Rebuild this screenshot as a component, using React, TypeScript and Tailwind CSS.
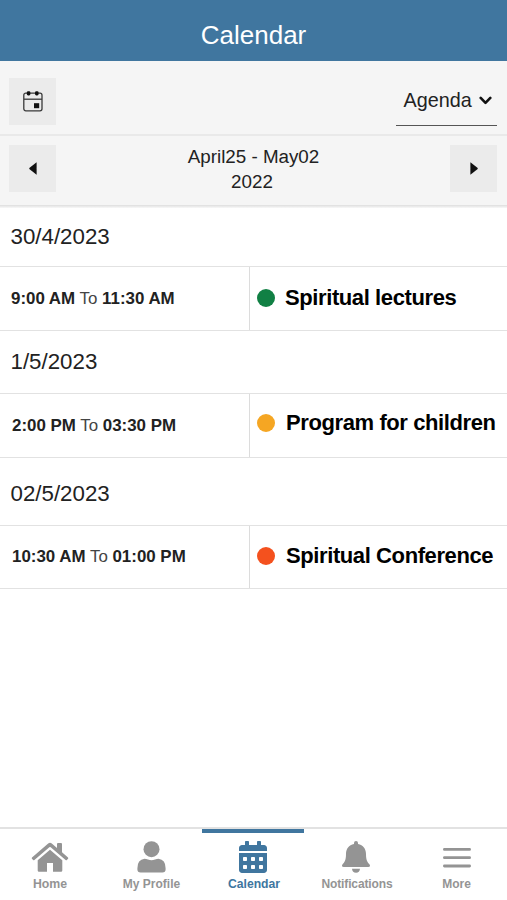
import React from "react";
import { FaCalendarAlt } from "react-icons/fa";

type AgendaEvent = {
  date: string;
  from: string;
  to: string;
  title: string;
  heading: string;
  row: string;
  time: string;
  dotOffset: string;
  label: string;
  dot: string;
};

const events: AgendaEvent[] = [
  {
    date: "30/4/2023",
    from: "9:00 AM",
    to: "11:30 AM",
    title: "Spiritual lectures",
    heading: "h-[58px] pl-[10.5px]",
    row: "h-[65px]",
    time: "pl-[11px]",
    dotOffset: "pb-0.5",
    label: "ml-2.5",
    dot: "bg-[#118044]",
  },
  {
    date: "1/5/2023",
    from: "2:00 PM",
    to: "03:30 PM",
    title: "Program for children",
    heading: "h-[62px] pl-[10.5px]",
    row: "h-[65px]",
    time: "pl-3",
    dotOffset: "pb-[6px]",
    label: "ml-[11px]",
    dot: "bg-[#f5a623]",
  },
  {
    date: "02/5/2023",
    from: "10:30 AM",
    to: "01:00 PM",
    title: "Spiritual Conference",
    heading: "h-[67px] pl-[10.5px] pt-1",
    row: "h-[64px]",
    time: "pl-3 pb-px",
    dotOffset: "pb-0.5",
    label: "ml-[11px]",
    dot: "bg-[#f4511e]",
  },
];

function TodayIcon() {
  return (
    <svg width="20" height="21" viewBox="0 0 20 21" fill="none">
      <rect x="0.8" y="2.2" width="18.2" height="17.6" rx="2" stroke="#3a3a3a" strokeWidth="1.3" />
      <path d="M1 8.2H19" stroke="#3a3a3a" strokeWidth="1.3" />
      <rect x="3.8" y="0.3" width="3.6" height="4.2" rx="1.4" fill="#111" />
      <rect x="12" y="0.3" width="3.6" height="4.2" rx="1.4" fill="#111" />
      <rect x="11" y="12.2" width="5.2" height="5" fill="#111" />
    </svg>
  );
}

function HomeIcon() {
  return (
    <svg width="38" height="32" viewBox="0 0 38 32" fill="currentColor">
      <path d="M1 16.4L17.2 2.4Q19 1 20.8 2.4L26 6.9V3Q26 2 27 2H30Q31 2 31 3V11.2L37 16.4Q37.6 17 37 17.7L35.9 18.9Q35.3 19.4 34.6 18.9L19.7 6.2Q19 5.7 18.3 6.2L3.4 18.9Q2.7 19.4 2.1 18.9L1 17.7Q.4 17 1 16.4Z" />
      <path d="M19 8.8L31.3 19.2V29.4Q31.3 30.7 30 30.7H22V22H16V30.7H8Q6.7 30.7 6.7 29.4V19.2Z" />
    </svg>
  );
}

function ProfileIcon() {
  return (
    <svg width="29" height="32" viewBox="0 0 29 32" fill="currentColor">
      <circle cx="14.5" cy="8.2" r="8" />
      <path d="M7.5 17.8Q9 17.8 11 18.6Q14.5 19.8 18 18.6Q20 17.8 21.5 17.8Q28.6 18.6 28.6 27.2V28.6Q28.6 31.6 25.4 31.6H3.6Q.4 31.6 .4 28.6V27.2Q.4 18.6 7.5 17.8Z" />
    </svg>
  );
}

function BellIcon() {
  return (
    <svg width="30" height="32" viewBox="0 0 30 32" fill="currentColor">
      <path d="M15 0Q17 0 17 2V3.1C22.2 4.1 25 8 25 13C25 19.5 26.5 21.3 28.4 23.2C29.6 24.5 29 26 27.3 26H2.7C1 26 .4 24.5 1.6 23.2C3.5 21.3 5 19.5 5 13C5 8 7.8 4.1 13 3.1V2Q13 0 15 0Z" />
      <path d="M11 27.8H19Q18.6 31.8 15 31.8Q11.4 31.8 11 27.8Z" />
    </svg>
  );
}

function MenuIcon() {
  return (
    <svg width="28" height="32" viewBox="0 0 28 32" stroke="currentColor" strokeWidth="2.8" strokeLinecap="round">
      <path d="M1.4 8.4H26.6M1.4 16.7H26.6M1.4 25H26.6" />
    </svg>
  );
}

export default function App() {
  return (
    <div className="flex h-[900px] w-[507px] flex-col overflow-hidden bg-white font-['Liberation_Sans',Arial,sans-serif] text-[#222]">
      <header className="flex h-[61px] shrink-0 items-center justify-center bg-[#40769f] pt-[9px] text-[26px] text-white">
        Calendar
      </header>

      <div className="flex h-[75px] shrink-0 items-start justify-between border-b-2 border-[#e9e9e9] bg-[#f5f5f5] pr-2.5 pl-[9px]">
        <button className="mt-[17px] flex h-[47px] w-[47px] items-center justify-center bg-[#ebebeb]">
          <TodayIcon />
        </button>
        <button className="mt-[15px] flex h-[50px] w-[101px] items-center justify-between border-b border-[#555] pr-[5px] pl-[7.5px]">
          <span className="text-[19.8px]">Agenda</span>
          <svg width="13" height="9" viewBox="0 0 13 9" fill="none" stroke="#111" strokeWidth="2.6" strokeLinecap="round" strokeLinejoin="round">
            <path d="M1.7 1.9L6.5 6.8L11.3 1.9" />
          </svg>
        </button>
      </div>

      <div className="flex h-[69px] shrink-0 items-start justify-between bg-[#f5f5f5] pt-[9px] pr-2.5 pl-[9px]">
        <button className="flex h-[47px] w-[47px] items-center justify-center bg-[#ebebeb]">
          <svg width="8" height="13" viewBox="0 0 8 13" fill="#111">
            <path d="M7.6 0.3V12.7L0.3 6.9V6.1Z" />
          </svg>
        </button>
        <div className="-mt-px pl-px text-center text-[18.8px] leading-[25px]">
          <p>April25 - May02</p>
          <p className="-ml-[3px]">2022</p>
        </div>
        <button className="flex h-[47px] w-[47px] items-center justify-center bg-[#ebebeb]">
          <svg width="8" height="13" viewBox="0 0 8 13" fill="#111">
            <path d="M0.4 0.3V12.7L7.7 6.9V6.1Z" />
          </svg>
        </button>
      </div>
      <div className="h-[3px] shrink-0 bg-linear-to-b from-[#dedede] to-[#f8f8f8]" />

      <main className="flex-1">
        {events.map((event) => (
          <section key={event.date}>
            <h2 className={`flex items-center text-[22.3px] ${event.heading}`}>{event.date}</h2>
            <div className={`flex border-y border-[#e2e2e2] ${event.row}`}>
              <div className={`flex w-[250px] items-center border-r border-[#dcdcdc] text-[16.9px] whitespace-pre ${event.time}`}>
                <b>{event.from}</b><span className="text-[#444]"> To </span><b>{event.to}</b>
              </div>
              <div className={`flex items-center pl-[7px] ${event.dotOffset}`}>
                <span className={`h-[18px] w-[18px] rounded-full ${event.dot}`} />
                <b className={`text-[22px] leading-6 tracking-[-0.4px] whitespace-nowrap text-black ${event.label}`}>{event.title}</b>
              </div>
            </div>
          </section>
        ))}
      </main>

      <nav className="flex h-[73px] shrink-0 border-t-2 border-[#e2e2e2] text-xs font-bold text-[#949494]">
        <a className="flex w-[99px] flex-col items-center border-t-4 border-transparent pt-2">
          <HomeIcon />
          <span className="mt-[3px] pl-px text-[12.3px] leading-4">Home</span>
        </a>
        <a className="flex w-[105px] flex-col items-center border-t-4 border-transparent pt-2">
          <ProfileIcon />
          <span className="mt-[3px] leading-4">My Profile</span>
        </a>
        <a className="-ml-0.5 flex w-[102px] flex-col items-center border-t-4 border-[#40769f] pt-2 text-[#40769f]">
          <FaCalendarAlt className="h-8 w-7" />
          <span className="mt-[3px] pl-0.5 text-[12.2px] leading-4">Calendar</span>
        </a>
        <a className="flex w-[104px] flex-col items-center border-t-4 border-transparent pt-2">
          <BellIcon />
          <span className="mt-[3px] pl-0.5 tracking-[-0.12px] leading-4">Notifications</span>
        </a>
        <a className="flex w-[97px] flex-col items-center border-t-4 border-transparent pt-2">
          <MenuIcon />
          <span className="mt-[3px] leading-4">More</span>
        </a>
      </nav>
    </div>
  );
}
